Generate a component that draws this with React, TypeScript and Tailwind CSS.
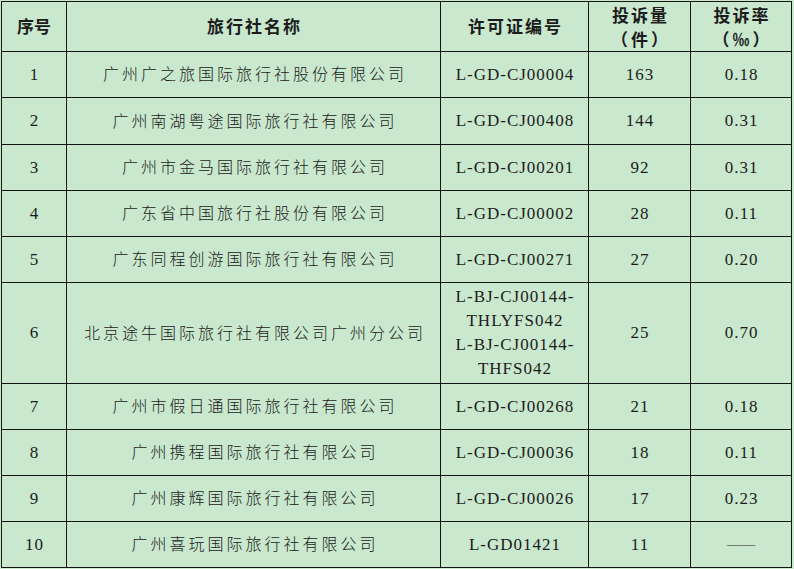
import React from "react";

type Row = {
  no: string;
  name: string;
  lic: string[];
  count: string;
  rate: string;
};

const rows: Row[] = [
  { no: "1", name: "广州广之旅国际旅行社股份有限公司", lic: ["L-GD-CJ00004"], count: "163", rate: "0.18" },
  { no: "2", name: "广州南湖粤途国际旅行社有限公司", lic: ["L-GD-CJ00408"], count: "144", rate: "0.31" },
  { no: "3", name: "广州市金马国际旅行社有限公司", lic: ["L-GD-CJ00201"], count: "92", rate: "0.31" },
  { no: "4", name: "广东省中国旅行社股份有限公司", lic: ["L-GD-CJ00002"], count: "28", rate: "0.11" },
  { no: "5", name: "广东同程创游国际旅行社有限公司", lic: ["L-GD-CJ00271"], count: "27", rate: "0.20" },
  {
    no: "6",
    name: "北京途牛国际旅行社有限公司广州分公司",
    lic: ["L-BJ-CJ00144-", "THLYFS042", "L-BJ-CJ00144-", "THFS042"],
    count: "25",
    rate: "0.70",
  },
  { no: "7", name: "广州市假日通国际旅行社有限公司", lic: ["L-GD-CJ00268"], count: "21", rate: "0.18" },
  { no: "8", name: "广州携程国际旅行社有限公司", lic: ["L-GD-CJ00036"], count: "18", rate: "0.11" },
  { no: "9", name: "广州康辉国际旅行社有限公司", lic: ["L-GD-CJ00026"], count: "17", rate: "0.23" },
  { no: "10", name: "广州喜玩国际旅行社有限公司", lic: ["L-GD01421"], count: "11", rate: "——" },
];

const cell = "bg-[#c9e8ce] flex flex-col items-center justify-center text-center";
const latin = "font-['Liberation_Serif','Noto_Sans_CJK_SC',serif] text-[17px] leading-[24px] tracking-[1px] pl-[1px]";
const cjk = "font-['Noto_Sans_CJK_SC',sans-serif] font-light text-[16px] leading-[24px] tracking-[3px] pl-[3px] -mt-[3px]";
const head = "font-['Noto_Sans_CJK_SC',sans-serif] font-bold text-[17px] leading-[24px] tracking-[2px] pl-[2px]";

export default function App() {
  return (
    <div className="w-[794px] h-[569px] bg-[#c9e8ce] pt-[1px] pl-[1px] text-[#1c1c1c]">
      <div className="grid w-[791px] grid-cols-[64px_373px_147px_101px_100px] grid-rows-[49px_45px_46px_45px_45px_45px_100px_45px_45px_45px_45px] gap-[1px] bg-[#151515] p-[1px]">
        <div className={cell}>
          <span className="font-['Noto_Sans_CJK_SC',sans-serif] font-bold text-[17px] leading-[24px] -mt-[2px]">序号</span>
        </div>
        <div className={cell}>
          <span className={head + " -mt-[2px]"}>旅行社名称</span>
        </div>
        <div className={cell}>
          <span className={head + " -mt-[2px]"}>许可证编号</span>
        </div>
        <div className={cell}>
          <span className={head}>投诉量</span>
          <span className="font-['Noto_Sans_CJK_SC',sans-serif] font-bold text-[17px] leading-[24px] tracking-[3px] pl-[3px]">（件）</span>
        </div>
        <div className={cell}>
          <span className={head}>投诉率</span>
          <span className="font-['Noto_Sans_CJK_SC',sans-serif] font-bold text-[17px] leading-[24px] tracking-[3px] pl-[3px]">（‰）</span>
        </div>
        {rows.map((r) => (
          <React.Fragment key={r.no}>
            <div className={cell}>
              <span className={latin}>{r.no}</span>
            </div>
            <div className={cell}>
              <span className={cjk}>{r.name}</span>
            </div>
            <div className={cell}>
              {r.lic.map((l, i) => (
                <span key={i} className={latin}>
                  {l}
                </span>
              ))}
            </div>
            <div className={cell}>
              <span className={latin}>{r.count}</span>
            </div>
            <div className={cell}>
              {r.rate === "——" ? (
                <span className="font-['Liberation_Serif',serif] text-[14px] leading-[24px]">——</span>
              ) : (
                <span className={latin}>{r.rate}</span>
              )}
            </div>
          </React.Fragment>
        ))}
      </div>
    </div>
  );
}
